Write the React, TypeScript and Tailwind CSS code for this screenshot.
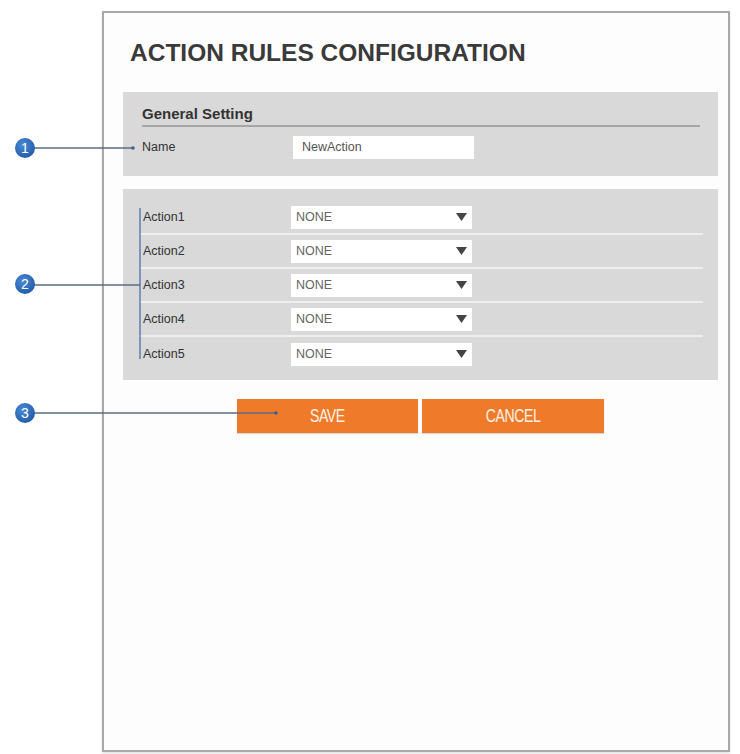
import React from 'react';

const actions = ['Action1', 'Action2', 'Action3', 'Action4', 'Action5'];

const SelectBox = () => (
  <div className="flex h-[23px] w-[181px] items-center justify-between bg-white pl-[5px] pr-[5px]">
    <span className="text-[12.5px] text-[#666]">NONE</span>
    <svg width="11" height="8" viewBox="0 0 11 8">
      <path d="M0 0 H11 L5.5 8 Z" fill="#444" />
    </svg>
  </div>
);

// callout markers that sit over the frame
const Callouts = () => (
  <svg className="pointer-events-none absolute left-0 top-0" width="740" height="754" viewBox="0 0 740 754">
    <defs>
      <radialGradient id="ball" cx="40%" cy="35%" r="70%">
        <stop offset="0%" stopColor="#4c8ad4" />
        <stop offset="100%" stopColor="#1f5aa6" />
      </radialGradient>
    </defs>
    {/* 1 */}
    <line x1="30" y1="148" x2="133" y2="148" stroke="#5a6b85" strokeWidth="1.3" />
    <circle cx="133" cy="148" r="1.8" fill="#3d5f95" />
    {/* 2 */}
    <line x1="30" y1="285" x2="140" y2="285" stroke="#5a6b85" strokeWidth="1.3" />
    <line x1="140" y1="208" x2="140" y2="359" stroke="#4a6fb0" strokeWidth="1.3" />
    {/* 3 */}
    <line x1="30" y1="413" x2="276" y2="413" stroke="#5a6b85" strokeWidth="1.3" />
    <circle cx="276" cy="413" r="1.8" fill="#3d5f95" />
    {[
      { n: '1', y: 148 },
      { n: '2', y: 284 },
      { n: '3', y: 413 },
    ].map((c) => (
      <g key={c.n}>
        <circle cx="25" cy={c.y} r="10" fill="url(#ball)" />
        <text
          x="25"
          y={c.y + 5}
          textAnchor="middle"
          fontSize="14"
          fill="#fff"
          fontFamily="'Liberation Sans', Arial, sans-serif"
        >
          {c.n}
        </text>
      </g>
    ))}
  </svg>
);

export default function App() {
  return (
    <div className="relative h-[754px] w-[740px] bg-white font-['Liberation_Sans',Arial,sans-serif]">
      <div className="ml-[102px] pt-[11px]">
        <div className="h-[741px] w-[628px] border-2 border-[#a8a8a8] bg-[#fdfdfd] pl-[19px] shadow-[0_1px_2px_rgba(0,0,0,0.15)]">
          <h1 className="ml-[7px] mt-[26px] text-[24.5px] font-bold leading-[28px] text-[#3a3a3a]">
            ACTION RULES CONFIGURATION
          </h1>

          {/* General Setting */}
          <div className="mt-[25px] h-[84px] w-[595px] bg-[#d9d9d9] pl-[19px] pr-[18px] pt-[13px]">
            <div className="border-b-2 border-[#a6a6a6] pb-[2px] text-[15px] font-bold leading-[18px] text-[#333]">
              General Setting
            </div>
            <div className="mt-[9px] flex items-center">
              <span className="w-[151px] text-[12.5px] text-[#333]">Name</span>
              <div className="flex h-[23px] w-[181px] items-center bg-white pl-[9px] text-[12.5px] text-[#555]">
                NewAction
              </div>
            </div>
          </div>

          {/* Actions */}
          <div className="mt-[13px] w-[595px] bg-[#d9d9d9] pb-[9px] pl-[17px] pr-[15px] pt-[12px]">
            {actions.map((a, i) => (
              <div
                key={a}
                className={`flex h-[34px] items-center ${i < actions.length - 1 ? 'border-b-2 border-[#efefef]' : ''}`}
              >
                <span className="w-[151px] pl-[3px] text-[12.5px] text-[#333]">{a}</span>
                <SelectBox />
              </div>
            ))}
          </div>

          {/* Buttons */}
          <div className="mt-[19px] flex w-[595px] justify-center gap-[4px]">
            <button className="h-[34px] w-[181px] bg-[#ef7b2a] text-[#fdf2e8] shadow-[0_1px_1px_rgba(0,0,0,0.15)]">
              <span className="inline-block scale-x-[0.78] text-[18px] tracking-[-0.5px]">SAVE</span>
            </button>
            <button className="h-[34px] w-[182px] bg-[#ef7b2a] text-[#fdf2e8] shadow-[0_1px_1px_rgba(0,0,0,0.15)]">
              <span className="inline-block scale-x-[0.78] text-[18px] tracking-[-0.5px]">CANCEL</span>
            </button>
          </div>
        </div>
      </div>
      <Callouts />
    </div>
  );
}
